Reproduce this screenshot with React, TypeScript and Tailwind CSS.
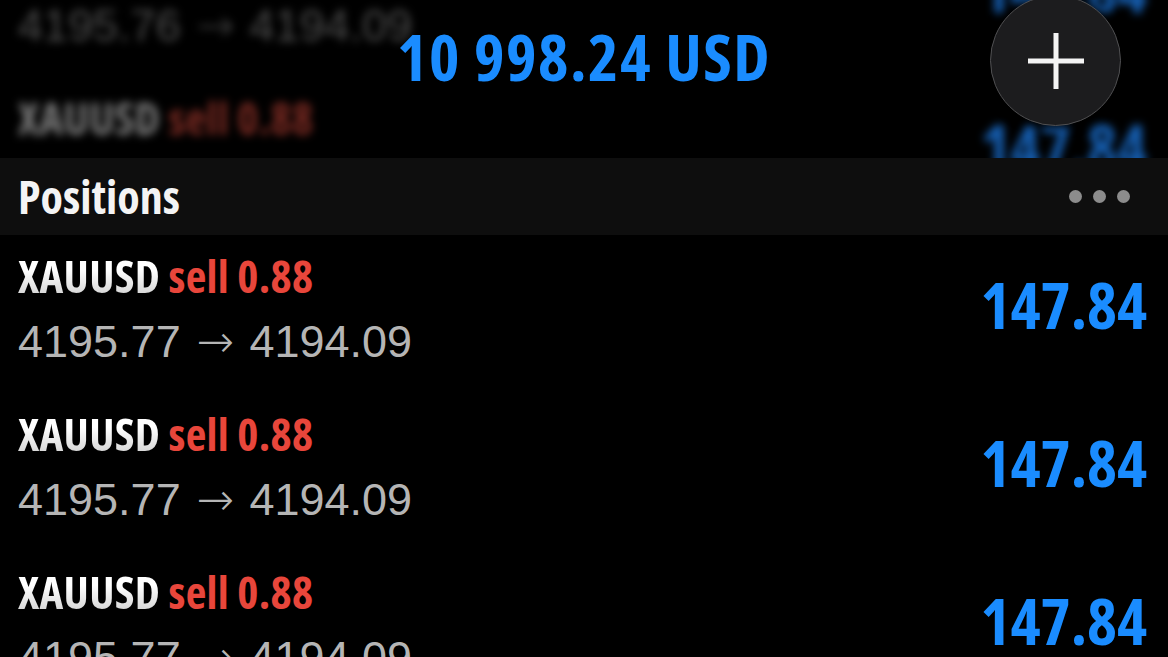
import React from "react";

const narrow = "font-['Open_Sans',sans-serif] font-stretch-condensed";
const plain = "font-['Liberation_Sans','Arial',sans-serif]";

type RowProps = {
  entry: string;
  profit: string;
  ghost?: boolean;
};

function PositionRow({ entry, profit, ghost }: RowProps) {
  return (
    <div className="flex h-[158px] items-start justify-between pl-[18px] pr-[21px] pt-[17px]">
      <div>
        <div className={`${narrow} text-[45px] font-bold leading-[48px] tracking-[0.3px]`}>
          <span
            className={
              ghost
                ? "text-[#7c7c7c]"
                : "bg-gradient-to-b from-white from-40% to-[#c4c4c4] bg-clip-text text-transparent"
            }
          >
            XAUUSD
          </span>{" "}
          <span className={ghost ? "text-[#7a2a22]" : "text-[#e8463b]"}>sell 0.88</span>
        </div>
        <div
          className={`${plain} mt-[18px] text-[45px] leading-[48px] ${
            ghost ? "text-[#4e4e4e]" : "text-[#b5b5b5]"
          }`}
        >
          {entry}{" "}
          <span className="mx-[3px] font-['DejaVu_Sans',sans-serif] font-extralight">→</span> 4194.09
        </div>
      </div>
      <div
        className={`${narrow} mt-[21px] text-[64px] font-bold leading-[64px] ${
          ghost ? "text-[#1660b4]" : "text-[#1a8cff]"
        }`}
      >
        {profit}
      </div>
    </div>
  );
}

export default function App() {
  return (
    <div className="relative h-[657px] w-[1168px] overflow-hidden bg-black">
      {/* Scrolled content under the blurred header */}
      <div className="relative h-[158px] overflow-hidden">
        <div className="-mt-[81px] blur-[4px]">
          <PositionRow entry="4195.76" profit="147.84" ghost />
          <PositionRow entry="4195.77" profit="147.84" ghost />
        </div>

        <div
          className={`${narrow} absolute inset-x-0 top-[23px] text-center text-[65px] font-bold leading-[66px] tracking-[1.5px] text-[#1a8cff]`}
        >
          10 998.24 USD
        </div>

        <button className="absolute left-[990px] top-[-5px] flex h-[131px] w-[131px] items-center justify-center rounded-full border-[1.5px] border-[#505052] bg-[#1c1c1e] shadow-[0_0_12px_rgba(0,0,0,0.8)]">
          <svg width="56" height="56" viewBox="0 0 56 56" fill="none">
            <path d="M28 0v56M0 28h56" stroke="#f4f4f4" strokeWidth="5" />
          </svg>
        </button>
      </div>

      {/* Section header */}
      <div className="flex h-[77px] items-center justify-between bg-[#0e0e0e] pl-[18px] pr-[38px]">
        <h2 className={`${narrow} text-[46px] font-bold leading-[47px] text-[#f4f4f4]`}>
          Positions
        </h2>
        <div className="flex items-center gap-[11px]">
          <span className="h-[13px] w-[13px] rounded-full bg-[#8c8c8c]" />
          <span className="h-[13px] w-[13px] rounded-full bg-[#8c8c8c]" />
          <span className="h-[13px] w-[13px] rounded-full bg-[#8c8c8c]" />
        </div>
      </div>

      {/* Positions list */}
      <div>
        <PositionRow entry="4195.77" profit="147.84" />
        <PositionRow entry="4195.77" profit="147.84" />
        <PositionRow entry="4195.77" profit="147.84" />
      </div>
    </div>
  );
}
